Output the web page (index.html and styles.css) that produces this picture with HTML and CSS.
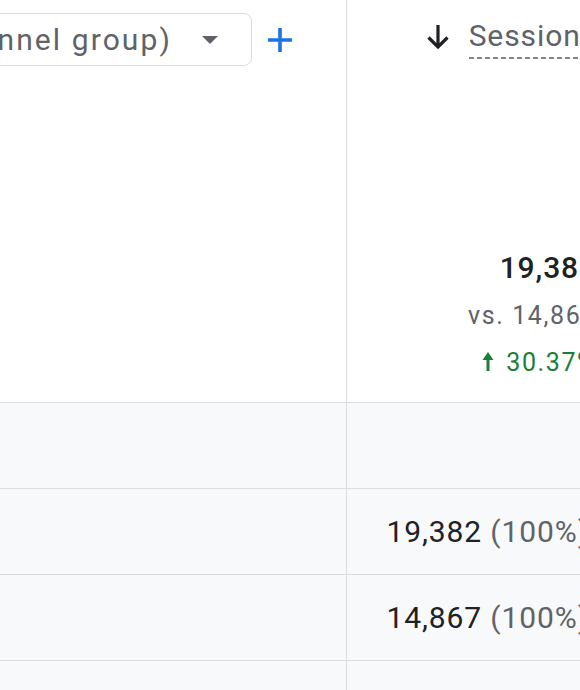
FILE: index.html
```html
<!DOCTYPE html>
<html lang="en">
<head>
   <meta charset="UTF-8">
   <meta name="viewport" content="width=device-width, initial-scale=1.0">
   <title>Traffic acquisition</title>
   <link rel="stylesheet" href="styles.css">
</head>
<body>
   <div class="report">
       <div class="cell dim-head">
           <div class="dim-picker">
               <span class="dim-label">Session primary channel group (Default channel group)</span>
               <span class="caret"></span>
           </div>
           <button class="add-dim" title="Add dimension">
               <svg width="26" height="26" viewBox="0 0 26 26"><path d="M13 1v24M1 13h24" stroke="#1a73e8" stroke-width="3.6" fill="none"/></svg>
           </button>
       </div>
       <div class="cell metric-head">
           <div class="metric-title">
               <svg class="sort-arrow" width="24" height="26" viewBox="0 0 24 26"><path d="M12 1v22M2.5 13.5l9.5 9.5 9.5-9.5" stroke="#202124" stroke-width="3.2" fill="none"/></svg>
               <span class="metric-name">Sessions</span>
           </div>
           <div class="totals">
               <div class="total-value">19,382</div>
               <div class="total-compare">vs. 14,867</div>
               <div class="total-change">
                   <svg class="up" width="12" height="20" viewBox="0 0 12 20"><path d="M6 19V4" stroke="#188038" stroke-width="3" fill="none"/><path d="M6 0L11.5 8h-11z" fill="#188038"/></svg>
                   <span>30.37%</span>
               </div>
           </div>
       </div>

       <div class="cell dim-cell"></div>
       <div class="cell num-cell"></div>

       <div class="cell dim-cell"></div>
       <div class="cell num-cell">19,382 <span class="share">(100%)</span></div>

       <div class="cell dim-cell"></div>
       <div class="cell num-cell">14,867 <span class="share">(100%)</span></div>

       <div class="cell dim-cell"></div>
       <div class="cell num-cell"></div>
   </div>
</body>
</html>
```

FILE: styles.css
```css
html, body {
    overflow: hidden;
}

body {
    margin: 0;
    font-family: Roboto, Arial, sans-serif;
    color: #202124;
    background: #fff;
    letter-spacing: 0.9px;
}

.report {
    display: grid;
    grid-template-columns: 347px 260px;
    grid-auto-rows: 86px;
    grid-template-rows: 403px;
}

.cell {
    border-bottom: 1px solid #dadce0;
    box-sizing: border-box;
}

.dim-head, .dim-cell {
    border-right: 1px solid #dadce0;
}

.dim-cell, .num-cell {
    background: #f8f9fa;
}

.dim-head {
    display: flex;
    justify-content: flex-end;
    align-items: flex-start;
    gap: 15px;
    padding: 13px 53px 0 0;
    overflow: hidden;
}

.dim-picker {
    display: flex;
    align-items: center;
    flex-shrink: 0;
    height: 53px;
    box-sizing: border-box;
    padding: 0 33px 0 16px;
    border: 1px solid #dadce0;
    border-radius: 8px;
    white-space: nowrap;
}

.dim-label {
    font-size: 30px;
    letter-spacing: 2.1px;
    color: #5f6368;
}

.caret {
    margin-left: 30px;
    width: 0;
    height: 0;
    border-left: 8px solid transparent;
    border-right: 8px solid transparent;
    border-top: 8px solid #5f6368;
}

.add-dim {
    display: flex;
    align-items: center;
    height: 53px;
    padding: 0;
    border: none;
    background: none;
    cursor: pointer;
}

.metric-head {
    padding: 17px 10px 0 0;
    text-align: right;
}

.metric-title {
    display: flex;
    align-items: flex-start;
    justify-content: flex-end;
    gap: 19px;
    height: 44px;
}

.sort-arrow {
    margin-top: 7px;
}

.metric-name {
    font-size: 30px;
    line-height: 38px;
    color: #5f6368;
    padding-bottom: 4px;
    background: linear-gradient(to right, #80868b 60%, transparent 0) left bottom / 8px 2px repeat-x;
}

.totals {
    margin-top: 183px;
}

.total-value {
    font-size: 30px;
    font-weight: 500;
    line-height: 48px;
}

.total-compare {
    font-size: 25px;
    letter-spacing: 1.6px;
    line-height: 48px;
    color: #5f6368;
}

.total-change {
    display: flex;
    align-items: center;
    justify-content: flex-end;
    gap: 12px;
    height: 44px;
    font-size: 25px;
    letter-spacing: 1.6px;
    color: #188038;
}

.num-cell {
    display: flex;
    align-items: center;
    justify-content: flex-end;
    padding-right: 18px;
    font-size: 30px;
    white-space: pre;
}

.share {
    color: #5f6368;
}
```
